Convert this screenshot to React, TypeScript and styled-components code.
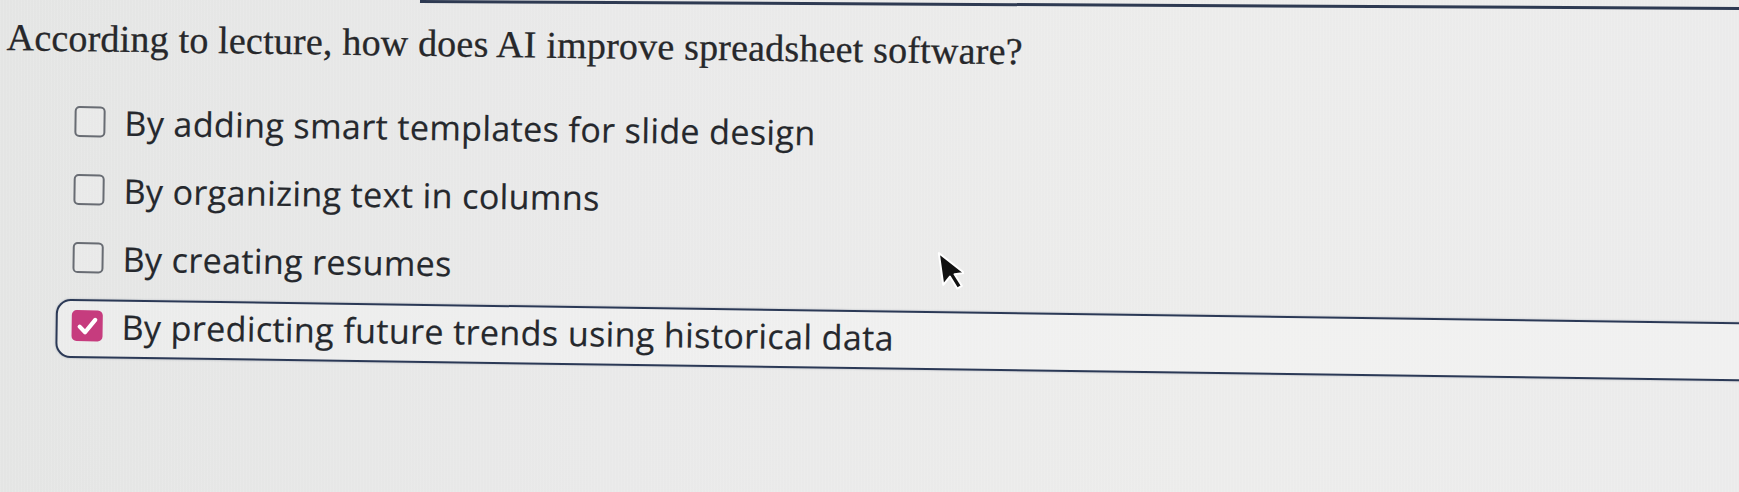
import React from "react";
import styled, { createGlobalStyle } from "styled-components";

const GlobalStyle = createGlobalStyle`
  html, body {
    margin: 0;
    padding: 0;
    width: 100%;
    height: 100%;
    overflow: hidden;
    background: #e9e9e9;
  }
  #root { height: 100%; }
`;

const Page = styled.div`
  position: relative;
  width: 100vw;
  height: 100vh;
  overflow: hidden;
  background:
    repeating-linear-gradient(90deg, rgba(255,255,255,0.10) 0 1px, rgba(0,0,0,0) 1px 3px),
    linear-gradient(90deg, #e4e5e4 0%, #e9e9e9 35%, #ececeb 70%, #ebebeb 100%);
`;

const TopRule = styled.div`
  height: 3px;
  margin-left: 420px;
  width: calc(100% - 390px);
  background: #2e3a52;
  transform: rotate(0.3deg);
  transform-origin: 0 0;
`;

const Content = styled.div`
  width: 1800px;
  padding-left: 7px;
  transform: rotate(0.8deg);
  transform-origin: 0 0;
`;

const Question = styled.div`
  margin: 12px 0 0 0;
  font-family: "Liberation Serif", "Times New Roman", serif;
  font-size: 38px;
  line-height: 44px;
  letter-spacing: 0.2px;
  color: #27282b;
  -webkit-text-stroke: 0.3px #27282b;
`;

const OptionList = styled.div`
  margin: 35px 0 0 53px;
  display: flex;
  flex-direction: column;
  gap: 9px;
`;

const OptionRow = styled.div<{ $selected?: boolean }>`
  display: flex;
  align-items: flex-start;
  gap: 19px;
  box-sizing: border-box;
  width: 1800px;
  height: 59px;
  padding: 5px 0 0 14px;
  border: 2px solid ${(p) => (p.$selected ? "#2b3956" : "transparent")};
  border-radius: 15px;
  background: ${(p) => (p.$selected ? "rgba(255,255,255,0.25)" : "transparent")};
  box-shadow: ${(p) => (p.$selected ? "0 0 2px rgba(43,57,86,0.35)" : "none")};
`;

const CheckBox = styled.span<{ $checked?: boolean }>`
  flex: none;
  display: flex;
  align-items: center;
  justify-content: center;
  box-sizing: border-box;
  width: 31px;
  height: 31px;
  margin-top: 4px;
  border-radius: 5px;
  border: ${(p) => (p.$checked ? "none" : "2px solid #686c73")};
  background: ${(p) => (p.$checked ? "#c63c7e" : "rgba(255,255,255,0.15)")};
`;

const Label = styled.span`
  font-family: "Open Sans", "Noto Sans", sans-serif;
  font-size: 34px;
  line-height: 40px;
  letter-spacing: 0.4px;
  color: #25282d;
  -webkit-text-stroke: 0.2px #25282d;
  white-space: nowrap;
`;

const Cursor = styled.svg`
  position: absolute;
  left: 936px;
  top: 251px;
  width: 28px;
  height: 46px;
`;

const options = [
  { text: "By adding smart templates for slide design", checked: false },
  { text: "By organizing text in columns", checked: false },
  { text: "By creating resumes", checked: false },
  { text: "By predicting future trends using historical data", checked: true },
];

export default function App() {
  return (
    <>
      <GlobalStyle />
      <Page>
        <TopRule />
        <Content>
          <Question>According to lecture, how does AI improve spreadsheet software?</Question>
          <OptionList>
            {options.map((o) => (
              <OptionRow key={o.text} $selected={o.checked}>
                <CheckBox $checked={o.checked}>
                  {o.checked && (
                    <svg width="31" height="31" viewBox="0 0 31 31">
                      <path
                        d="M8 16.5 L13.5 22 L23.5 9.5"
                        fill="none"
                        stroke="#ffffff"
                        strokeWidth="4.2"
                        strokeLinecap="round"
                        strokeLinejoin="round"
                      />
                    </svg>
                  )}
                </CheckBox>
                <Label>{o.text}</Label>
              </OptionRow>
            ))}
          </OptionList>
        </Content>
        <Cursor viewBox="0 0 20 32">
          <path
            d="M3 2 L3 25 L8.5 19.8 L12.5 29 L16 27.5 L12 18.6 L19 18.6 Z"
            fill="#111111"
            stroke="#ffffff"
            strokeWidth="1.4"
            strokeLinejoin="round"
            transform="translate(-1 -1) rotate(-8 3 2)"
          />
        </Cursor>
      </Page>
    </>
  );
}
